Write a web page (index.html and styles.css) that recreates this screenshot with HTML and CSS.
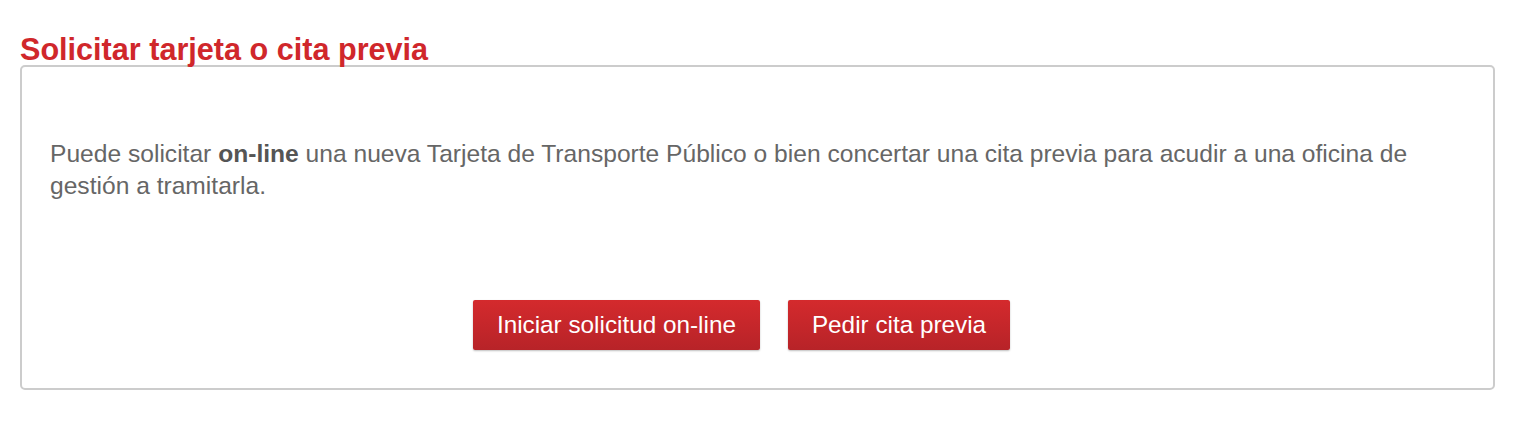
FILE: index.html
```html
<!DOCTYPE html>
<html lang="es">

<head>
    <meta charset="UTF-8">
    <meta name="viewport" content="width=device-width, initial-scale=1.0">
    <title>Solicitar tarjeta o cita previa</title>
    <link rel="stylesheet" href="styles.css">
</head>

<body>
    <div class="container">
        <h2 class="title">Solicitar tarjeta o cita previa</h2>
        <div class="box">
            <p class="text">Puede solicitar <strong>on-line</strong> una nueva Tarjeta de Transporte Público o bien concertar una cita previa para acudir a una oficina de gestión a tramitarla.</p>
            <div class="actions">
                <button class="btn">Iniciar solicitud on-line</button>
                <button class="btn">Pedir cita previa</button>
            </div>
        </div>
    </div>
</body>

</html>
```

FILE: styles.css
```css
body {
    margin: 0;
    font-family: "Liberation Sans", Arial, sans-serif;
    background: #fff;
}

.container {
    padding: 33px 19px 0 20px;
}

.title {
    margin: 0;
    font-size: 30.6px;
    line-height: 32px;
    font-weight: bold;
    color: #d0272b;
}

.box {
    border: 2px solid #cccccc;
    border-radius: 5px;
    padding: 71px 28px 38px 28px;
}

.text {
    margin: 0;
    font-size: 24.6px;
    line-height: 32px;
    color: #666666;
}

.text strong {
    color: #555555;
}

.actions {
    display: flex;
    justify-content: center;
    gap: 28px;
    margin-top: 98px;
    padding-right: 32px;
}

.btn {
    height: 50px;
    padding: 0 24px;
    font-family: inherit;
    font-size: 24.3px;
    color: #fff;
    border: none;
    border-radius: 2px;
    background: linear-gradient(#d42a2d, #b72328);
    box-shadow: 0 1px 2px rgba(0, 0, 0, 0.25);
    cursor: pointer;
}
```
